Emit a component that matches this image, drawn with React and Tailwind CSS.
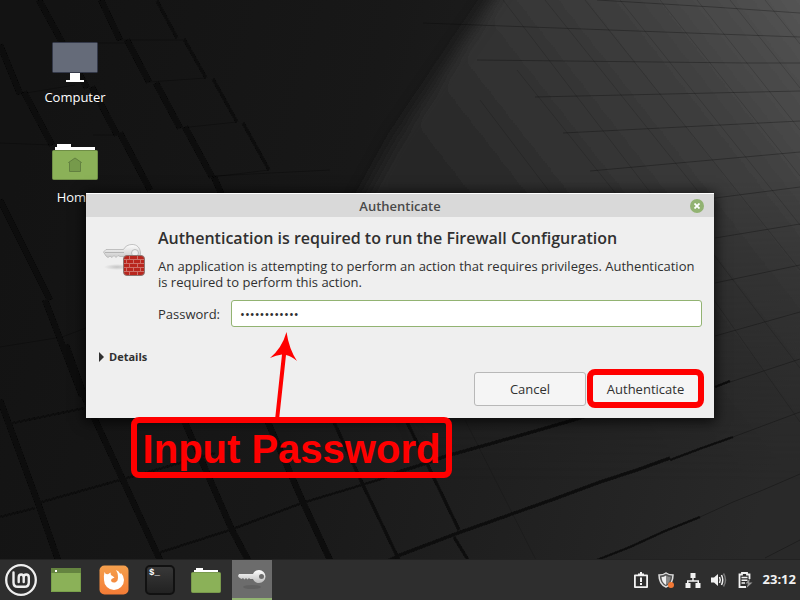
import React from "react";

function Wallpaper() {
  const bands = [
    "M0 45L20 94M24 92L52 145M0 200L50 300",
    "M39 0L87 88M92 87L117 135M120 133L150 190",
    "M101 0L120 40M127 40L149 82M156 83L180 128M185 127L212 177M214 177L224 200",
    "M45 300L82 396M66 345L85 398L160 560M0 400L38 503L58 560",
    "M183 418L232 530L248 560M267 420L302 500L330 560",
  ];
  const thinBands = [
    "M157 1L177 38M184 39L206 78M213 79L237 122M243 123L269 170",
    "M333 420L363 485L399 560M406 420L459 530M454 537L468 560",
    "M392 474L427 463L443 457L525 434L570 421L600 412",
    "M385 562L400 555L458 533L557 498L600 482L637 470L670 458",
  ];
  const joints = [
    "M8 424L85 408M0 517L35 508M38 503L120 480L215 453M155 554L230 530L302 503L365 484L400 473",
    "M670 460L702 448L733 437M715 387L730 381M597 560L630 547L665 531L700 517",
  ];
  const seams = [
    "M0 347L62 337L86 328M60 43H125M20 94L75 85M149 82L206 78M93 135H117M180 128L237 122M212 177L269 170M0 143L52 145M120 40H183M213 176L330 170",
    "M597 0L713 7L800 13M423 23L717 34L800 37M477 60L747 63H800M535 97L800 91M563 133L800 121M590 171L800 152M700 200L800 187M715 238L800 224M715 283L800 265",
    "M715 336L800 312M715 387L800 359M733 437L800 412M700 517L733 502L763 490L800 474M765 558L800 540",
  ];
  const slants = [
    "M503 0L656 200M545 0L705 200M585 0L800 270M620 0L800 225M660 0L800 176M697 0L800 130M730 0L800 88M765 0L800 44M517 70L617 195M480 100L552 195M714 255L800 368M714 300L800 422M465 420L536 560",
  ];
  return (
    <svg
      className="absolute inset-0 h-full w-full"
      viewBox="0 0 800 600"
      preserveAspectRatio="xMidYMid slice"
      aria-hidden="true"
    >
      <defs>
        <linearGradient id="base" x1="0" y1="0.4" x2="1" y2="0.6">
          <stop offset="0" stopColor="#131313" />
          <stop offset="0.4" stopColor="#181818" />
          <stop offset="0.7" stopColor="#202020" />
          <stop offset="1" stopColor="#292929" />
        </linearGradient>
        <linearGradient id="light" gradientUnits="userSpaceOnUse" x1="800" y1="0" x2="480" y2="250">
          <stop offset="0" stopColor="#545454" />
          <stop offset="0.4" stopColor="#3c3c3c" />
          <stop offset="1" stopColor="#262626" />
        </linearGradient>
        <linearGradient id="fade" gradientUnits="userSpaceOnUse" x1="0" y1="180" x2="0" y2="480">
          <stop offset="0" stopColor="#fff" />
          <stop offset="1" stopColor="#000" />
        </linearGradient>
        <mask id="fadeMask">
          <rect width="800" height="600" fill="url(#fade)" />
        </mask>
        <filter id="soft" x="-20%" y="-20%" width="140%" height="140%">
          <feGaussianBlur stdDeviation="8" />
        </filter>
        <filter id="edge">
          <feGaussianBlur stdDeviation="0.7" />
        </filter>
      </defs>
      <rect width="800" height="600" fill="url(#base)" />
      <g mask="url(#fadeMask)">
        <path d="M520 -40L395 140L340 240L500 640L900 640L900 -40Z" fill="url(#light)" filter="url(#soft)" />
      </g>
      <g fill="none" filter="url(#edge)">
        <path d={seams.join("")} stroke="#000" strokeOpacity="0.28" strokeWidth="1" />
        <path d={slants.join("")} stroke="#000" strokeOpacity="0.16" strokeWidth="1" />
        <path d={bands.join("")} stroke="#090909" strokeWidth="6" />
        <path d={thinBands.join("")} stroke="#0b0b0b" strokeWidth="3" />
        <path d={joints.join("")} stroke="#0c0c0c" strokeWidth="2" />
      </g>
    </svg>
  );
}

function ComputerIcon() {
  return (
    <svg width="46" height="42" viewBox="0 0 46 42" aria-hidden="true">
      <rect x="0.5" y="0.5" width="45" height="30" rx="1" fill="#656b79" stroke="#343949" />
      <path d="M18 31h10v7h4v2H14v-2h4z" fill="#fff" />
    </svg>
  );
}

function HomeIcon() {
  return (
    <svg width="46" height="38" viewBox="0 0 46 38" aria-hidden="true">
      <path d="M3 10V5h2V2h14v3h24v5z" fill="#fff" />
      <rect x="0.5" y="8.500" width="45" height="29" rx="1" fill="#8bb158" stroke="#6f8e46" />
      <path d="M17.500 29.500v-9h-1l6.500-4.500 6.500 4.500h-1v9z" fill="#769a4b" stroke="#628040" />
    </svg>
  );
}

function FirewallKeyIcon() {
  return (
    <svg width="44" height="34" viewBox="0 0 44 34" aria-hidden="true">
      <defs>
        <linearGradient id="silver" x1="0" y1="0" x2="0" y2="1">
          <stop offset="0" stopColor="#fdfdfd" />
          <stop offset="1" stopColor="#b9b9b9" />
        </linearGradient>
        <radialGradient id="keyShade">
          <stop offset="0" stopColor="#999" stopOpacity="0.5" />
          <stop offset="1" stopColor="#999" stopOpacity="0" />
        </radialGradient>
      </defs>
      <ellipse cx="14" cy="23" rx="13" ry="3" fill="url(#keyShade)" />
      <path
        d="M3 5.500H20.500C22 2.500 25 .5 29 .5C34 .5 37 3.500 37.500 9C37.500 15 34 18 29 18C25 18 22 15.500 21 12.500H17L15 11.500L13 13.500L11 11.500L9 13.500L7 12L5 13.500L3 12L.5 8Z"
        fill="url(#silver)"
        stroke="#b4b4b4"
        strokeWidth="0.800"
      />
      <path d="M2 8.500H21" stroke="#aaa" strokeWidth="0.800" />
      <circle cx="32" cy="9" r="3.500" fill="#eee" stroke="#bbb" />
      <rect x="20.500" y="11.500" width="21" height="20" rx="3.500" fill="#b9261e" stroke="#8d7773" />
      <path
        d="M21 15.500H41M21 19.500H41M21 23.500H41M21 27.500H41M26.500 12V15M34.500 12V15M23.500 16V19M30.500 16V19M37.500 16V19M26.500 20V23M34.500 20V23M23.500 24V27M30.500 24V27M37.500 24V27M26.500 28V31M34.500 28V31"
        stroke="#d3847c"
        strokeWidth="0.800"
      />
    </svg>
  );
}

function MintIcon() {
  return (
    <svg width="32" height="32" viewBox="0 0 32 32" fill="none" stroke="#efefef" aria-hidden="true">
      <circle cx="16" cy="16" r="14.800" strokeWidth="2.300" />
      <path
        d="M8.500 8.500V18.500Q8.500 22.800 12.800 22.800H19.500Q23.800 22.800 23.800 18.500V13.500Q23.800 10.500 21.200 10.500Q18.700 10.500 18.700 13.500V18M18.700 13.500Q18.700 10.500 16.200 10.500Q13.700 10.500 13.700 13.500V18"
        strokeWidth="2.400"
        strokeLinecap="round"
      />
    </svg>
  );
}

function DesktopIcon() {
  return (
    <svg width="30" height="24" viewBox="0 0 30 24" aria-hidden="true">
      <rect width="30" height="24" fill="#8bb158" />
      <rect width="30" height="5" fill="#658440" />
      <path d="M.5 5V23.500H29.500V5" fill="none" stroke="#79a04b" />
      <rect x="4" y="2" width="2" height="2" fill="#fff" />
    </svg>
  );
}

function FirefoxIcon() {
  return (
    <svg width="30" height="30" viewBox="0 0 30 30" aria-hidden="true">
      <defs>
        <linearGradient id="fox" x1="0" y1="0" x2="0" y2="1">
          <stop offset="0" stopColor="#f5a04d" />
          <stop offset="1" stopColor="#f47c36" />
        </linearGradient>
      </defs>
      <rect x="0.500" y="0.500" width="29" height="29" rx="5" fill="url(#fox)" />
      <path
        d="M5.500 7L6.800 9L9 9.300L11.500 7.500Q11.200 10 13.500 11L15.500 12.500L12.500 14L12 16Q14 18.500 17 17L18.500 15.500Q20 10 17 5Q20 6 21.300 9L22 8Q25 11 25 15A10 10 0 0 1 5 15Q4.500 11 5.500 7Z"
        fill="#fff"
      />
    </svg>
  );
}

function TerminalIcon() {
  return (
    <span className="flex h-[30px] w-[30px] items-start rounded-[5px] border-2 border-[#111111] bg-linear-to-b from-[#383838] to-[#222222] px-0.5 font-['Liberation_Mono',monospace] text-[9px] leading-[12px] font-bold text-white">
      $_
    </span>
  );
}

function FilesIcon() {
  return (
    <svg width="30" height="25" viewBox="0 0 30 25" aria-hidden="true">
      <path d="M3 6V2h2V0h7v2h15v4z" fill="#fff" />
      <rect x="0.500" y="4.500" width="29" height="20" rx="1" fill="#8bb158" stroke="#79994c" />
    </svg>
  );
}

function KeyIcon() {
  return (
    <svg width="28" height="20" viewBox="0 0 28 20" aria-hidden="true">
      <defs>
        <linearGradient id="metal" x1="0" y1="0" x2="0" y2="1">
          <stop offset="0" stopColor="#fff" />
          <stop offset="1" stopColor="#bbb" />
        </linearGradient>
      </defs>
      <ellipse cx="14" cy="18" rx="9" ry="2" fill="#606060" />
      <path
        fillRule="evenodd"
        d="M1 5H15C16 2.500 18.500 1 21 1A6.500 6.500 0 0 1 21 14C18.500 14 16 12.500 15 10H12L11 9L9.500 10.500L8 9L6.500 10.500L5 9L3.500 10L1 8.500L0 7ZM23.500 5A2.500 2.500 0 1 0 23.500 10A2.500 2.500 0 1 0 23.500 5Z"
        fill="url(#metal)"
      />
    </svg>
  );
}

function TrayIcon({ name }) {
  const art = {
    report: (
      <>
        <path d="M1.900 3.400H14.100V15.100H1.900Z" fill="none" stroke="#f2f2f2" strokeWidth="1.800" strokeLinejoin="round" />
        <path d="M5 1.500h2V0h2v1.500h2V4H5z" fill="#f2f2f2" />
        <path d="M7 5.500h2v4.500H7zM7 11h2v2H7z" fill="#f2f2f2" />
      </>
    ),
    shield: (
      <>
        <path d="M7 1C9 2.500 11.500 3 14 3C14 8.500 12 13 7 15C2 13 0 8.500 0 3C2.500 3 5 2.500 7 1Z" fill="#555" stroke="#dedede" strokeWidth="1.500" />
        <path d="M7 3.500C5.500 4.500 4 5 2.500 5C2.700 8.500 4 11.500 7 13Z" fill="#eee" />
        <path d="M7 3.500C8.500 4.500 10 5 11.500 5C11.300 8.500 10 11.500 7 13Z" fill="#888" />
        <circle cx="12" cy="13" r="3" fill="#f27835" />
      </>
    ),
    network: (
      <path d="M5.500 1h5v5H8.700v2.200H14V11h1.500v5h-5v-5h2V9.700H3.500V11h2v5H.5v-5h1.500V8.200h5.300V6H5.500z" fill="#f2f2f2" />
    ),
    volume: (
      <>
        <path d="M0 5.500H3L7 2V14L3 10.500H0Z" fill="#f2f2f2" />
        <path d="M8.500 5Q10 8 8.500 11M10.500 3Q13 8 10.500 13" fill="none" stroke="#f2f2f2" strokeWidth="1.500" />
        <path d="M12.500 1.500Q16.500 8 12.500 14.500" fill="none" stroke="#777" strokeWidth="1.500" />
      </>
    ),
    battery: (
      <>
        <path d="M9 15H2.500V2.500H5V1H10V2.500H12.500V7" fill="none" stroke="#f2f2f2" strokeWidth="1.800" />
        <path d="M4.500 5.500H10.500M4.500 8.200H10.500M4.500 11H8" stroke="#f2f2f2" strokeWidth="1.500" />
        <path d="M13 6.500L8.500 11.500H11L9.500 16L15.500 10.500H12Z" fill="#999" />
      </>
    ),
  };
  return (
    <svg width="16" height="16" viewBox="0 0 16 16" aria-hidden="true" className="overflow-visible">
      {art[name]}
    </svg>
  );
}

function AuthDialog() {
  return (
    <section
      role="dialog"
      aria-labelledby="window-title"
      className="absolute inset-x-[86px] top-[193px] border-t border-white bg-[#efefef] text-[13px] leading-4 text-[#303030] shadow-[0_2px_12px_2px_#000000b0]"
    >
      <header className="grid h-[23px] grid-cols-[1fr_auto_1fr] items-center bg-[#d9d9d9] px-2.5">
        <span />
        <h1 id="window-title" className="font-semibold text-[#4a4a4a]">Authenticate</h1>
        <button aria-label="Close" className="flex size-3.5 items-center justify-center justify-self-end rounded-full bg-[#92b372]">
          <svg width="6" height="6" viewBox="0 0 6 6" stroke="#fff" strokeWidth="1.800" aria-hidden="true">
            <path d="M.5 .5L5.500 5.500M5.500 .5L.5 5.500" />
          </svg>
        </button>
      </header>
      <form className="px-3 pt-[11px] pb-2.5" onSubmit={(event) => event.preventDefault()}>
        <div className="flex gap-3">
          <div className="w-12 shrink-0 pt-4 pl-[5px]">
            <FirewallKeyIcon />
          </div>
          <div className="min-w-0 grow">
            <h2 className="text-base leading-5 font-semibold whitespace-nowrap">
              Authentication is required to run the Firewall Configuration
            </h2>
            <p className="mt-2.5">
              An application is attempting to perform an action that requires privileges. Authentication is
              required to perform this action.
            </p>
            <div className="mt-2.5 flex items-center gap-3">
              <label htmlFor="password" className="w-[61px] whitespace-nowrap">Password:</label>
              <input
                id="password"
                type="password"
                defaultValue="abcdefghijkl"
                className="h-[27px] min-w-0 grow rounded-[3px] border border-[#92b372] bg-white px-2 outline-none"
              />
            </div>
          </div>
        </div>
        <button type="button" className="mt-[22px] flex items-center gap-[5px] pl-px text-[11px] font-bold">
          <svg width="5" height="10" viewBox="0 0 5 10" fill="#303030" aria-hidden="true">
            <path d="M0 0L5 5L0 10Z" />
          </svg>
          Details
        </button>
        <div className="-mr-0.5 mt-1 flex items-center justify-end gap-px">
          <button type="button" className="h-[34px] w-28 rounded-[3px] border border-[#b8b8b8] bg-[#f5f5f5]">
            Cancel
          </button>
          <button type="submit" className="h-[39px] w-[117px] rounded-lg border-6 border-[#ff0000] bg-[#f5f5f5]">
            Authenticate
          </button>
        </div>
      </form>
    </section>
  );
}

export default function App() {
  return (
    <div className="relative flex min-h-screen flex-col overflow-hidden bg-[#171717] font-['Open_Sans','Noto_Sans',sans-serif]">
      <Wallpaper />
      <main className="relative grow">
        <div className="flex w-[150px] flex-col gap-[37px] pt-[42px] text-[13px] leading-4 text-white">
          <div className="flex h-[63px] flex-col items-center justify-between">
            <ComputerIcon />
            <span>Computer</span>
          </div>
          <div className="flex h-[63px] flex-col items-center justify-between">
            <HomeIcon />
            <span>Home</span>
          </div>
        </div>
        <AuthDialog />
        <svg className="absolute top-[332px] left-[268px]" width="32" height="88" viewBox="0 0 32 88" aria-hidden="true">
          <path d="M18.500 0Q21 17 29 29Q23 24 18 23L11 88H7L14 22.500Q8 23 2 26Q14 16 18.500 0Z" fill="#ff0000" />
        </svg>
        <div className="absolute top-[417px] left-[131px] flex h-[61px] w-[321px] items-center justify-center rounded-lg border-6 border-[#ff0000] pt-0.5 font-['Liberation_Sans',sans-serif] text-[40px] leading-none font-bold whitespace-nowrap text-[#ff0000]">
          Input Password
        </div>
      </main>
      <footer className="relative flex h-[41px] items-stretch border-t border-[#222222] bg-[#2e2e2e]">
        <nav aria-label="Applications" className="flex items-stretch">
          <button aria-label="Menu" className="flex w-[42px] items-center justify-center"><MintIcon /></button>
          <button aria-label="Show desktop" className="flex w-12 items-center justify-center"><DesktopIcon /></button>
          <button aria-label="Firefox" className="flex w-12 items-center justify-center"><FirefoxIcon /></button>
          <button aria-label="Terminal" className="flex w-11 items-center justify-center"><TerminalIcon /></button>
          <button aria-label="Files" className="mr-0.5 flex w-12 items-center justify-center"><FilesIcon /></button>
          <button aria-label="Authenticate" className="flex w-10 items-center justify-center border-b-2 border-[#92b372] bg-[#6c6c6c]"><KeyIcon /></button>
        </nav>
        <div className="ml-auto flex items-center gap-2.5 pr-1 text-[13px] font-bold text-[#f2f2f2]">
          <TrayIcon name="report" />
          <TrayIcon name="shield" />
          <TrayIcon name="network" />
          <TrayIcon name="volume" />
          <TrayIcon name="battery" />
          <time>23:12</time>
        </div>
      </footer>
    </div>
  );
}
